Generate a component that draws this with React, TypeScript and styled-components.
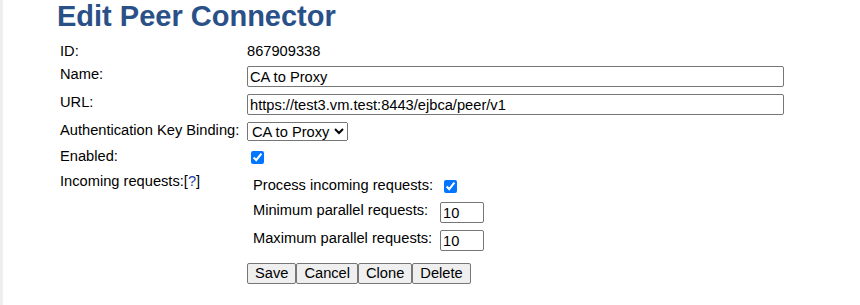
import React from 'react';
import styled, {createGlobalStyle} from 'styled-components';

const GlobalStyle = createGlobalStyle`
  html, body {
    margin: 0;
    background: #ffffff;
  }
  body {
    font-family: "Liberation Sans", Arial, sans-serif;
    font-size: 14.667px;
    color: #000000;
  }
`;

const Field = ({label, height, children}: {label: React.ReactNode; height: number; children: React.ReactNode}) => (
  <Styled.Row $height={height}>
    <Styled.Label>{label}</Styled.Label>
    <Styled.Value>{children}</Styled.Value>
  </Styled.Row>
);

const SubField = ({label, height, children}: {label: string; height: number; children: React.ReactNode}) => (
  <Styled.SubRow $height={height}>
    <Styled.SubLabel>{label}</Styled.SubLabel>
    <div>{children}</div>
  </Styled.SubRow>
);

export default function App() {
  return (
    <Styled.Page>
      <GlobalStyle />
      <Styled.Title>Edit Peer Connector</Styled.Title>
      <Styled.Form>
        <Field label="ID:" height={23}>
          <Styled.Text>867909338</Styled.Text>
        </Field>
        <Field label="Name:" height={28}>
          <Styled.TextInput type="text" defaultValue="CA to Proxy" $width={537} />
        </Field>
        <Field label="URL:" height={28}>
          <Styled.TextInput type="text" defaultValue="https://test3.vm.test:8443/ejbca/peer/v1" $width={537} />
        </Field>
        <Field label="Authentication Key Binding:" height={26}>
          <Styled.Select defaultValue="ca">
            <option value="ca">CA to Proxy</option>
          </Styled.Select>
        </Field>
        <Field label="Enabled:" height={25}>
          <Styled.Check type="checkbox" defaultChecked />
        </Field>
        <Field
          label={
            <>
              Incoming requests:[<Styled.Help href="#">?</Styled.Help>]
            </>
          }
          height={90}
        >
          <Styled.SubForm>
            <SubField label="Process incoming requests:" height={25}>
              <Styled.Check type="checkbox" defaultChecked />
            </SubField>
            <SubField label="Minimum parallel requests:" height={28}>
              <Styled.TextInput type="text" defaultValue="10" $width={44} />
            </SubField>
            <SubField label="Maximum parallel requests:" height={21}>
              <Styled.TextInput type="text" defaultValue="10" $width={44} />
            </SubField>
          </Styled.SubForm>
        </Field>
        <Field label="" height={21}>
          <Styled.Buttons>
            <Styled.Button>Save</Styled.Button>
            <Styled.Button>Cancel</Styled.Button>
            <Styled.Button>Clone</Styled.Button>
            <Styled.Button>Delete</Styled.Button>
          </Styled.Buttons>
        </Field>
      </Styled.Form>
    </Styled.Page>
  );
}

const Styled = {
  Page: styled.main`
    min-height: 305px;
    box-sizing: border-box;
    border-left: 3px solid #eeeeee;
    padding-left: 54px;
  `,
  Title: styled.h1`
    margin: 0;
    font-size: 29px;
    line-height: 33px;
    font-weight: bold;
    color: #2a5088;
  `,
  Form: styled.div`
    margin-top: 10px;
    margin-left: 3px;
    display: flex;
    flex-direction: column;
  `,
  Row: styled.div<{$height: number}>`
    display: grid;
    grid-template-columns: 187px 1fr;
    align-items: start;
    height: ${(p) => p.$height}px;
  `,
  Label: styled.div`
    line-height: 17px;
  `,
  Value: styled.div`
    line-height: 17px;
  `,
  Text: styled.span`
    line-height: 17px;
  `,
  Help: styled.a`
    color: #2b3fae;
    text-decoration: none;
  `,
  TextInput: styled.input<{$width: number}>`
    box-sizing: border-box;
    width: ${(p) => p.$width}px;
    height: 21px;
    margin: 0;
    padding: 1px 2px;
    border: 1px solid #767676;
    border-radius: 2px;
    font: inherit;
    line-height: 17px;
    color: #000;
  `,
  Select: styled.select`
    height: 19px;
    margin: 0;
    font: inherit;
    color: #000;
  `,
  Check: styled.input`
    width: 13px;
    height: 13px;
    margin: 3px 3px 3px 4px;
    accent-color: #0075ff;
  `,
  SubForm: styled.div`
    margin-top: 4px;
    display: flex;
    flex-direction: column;
  `,
  SubRow: styled.div<{$height: number}>`
    display: grid;
    grid-template-columns: 193px auto;
    align-items: start;
    height: ${(p) => p.$height}px;
  `,
  SubLabel: styled.div`
    padding-left: 6px;
    line-height: 17px;
  `,
  Buttons: styled.div`
    display: flex;
    gap: 0;
  `,
  Button: styled.button`
    height: 21px;
    margin: 0;
    padding: 1px 7px;
    background: #efefef;
    border: 1px solid #767676;
    border-radius: 2px;
    font: inherit;
    line-height: 17px;
    color: #000;
  `,
};
